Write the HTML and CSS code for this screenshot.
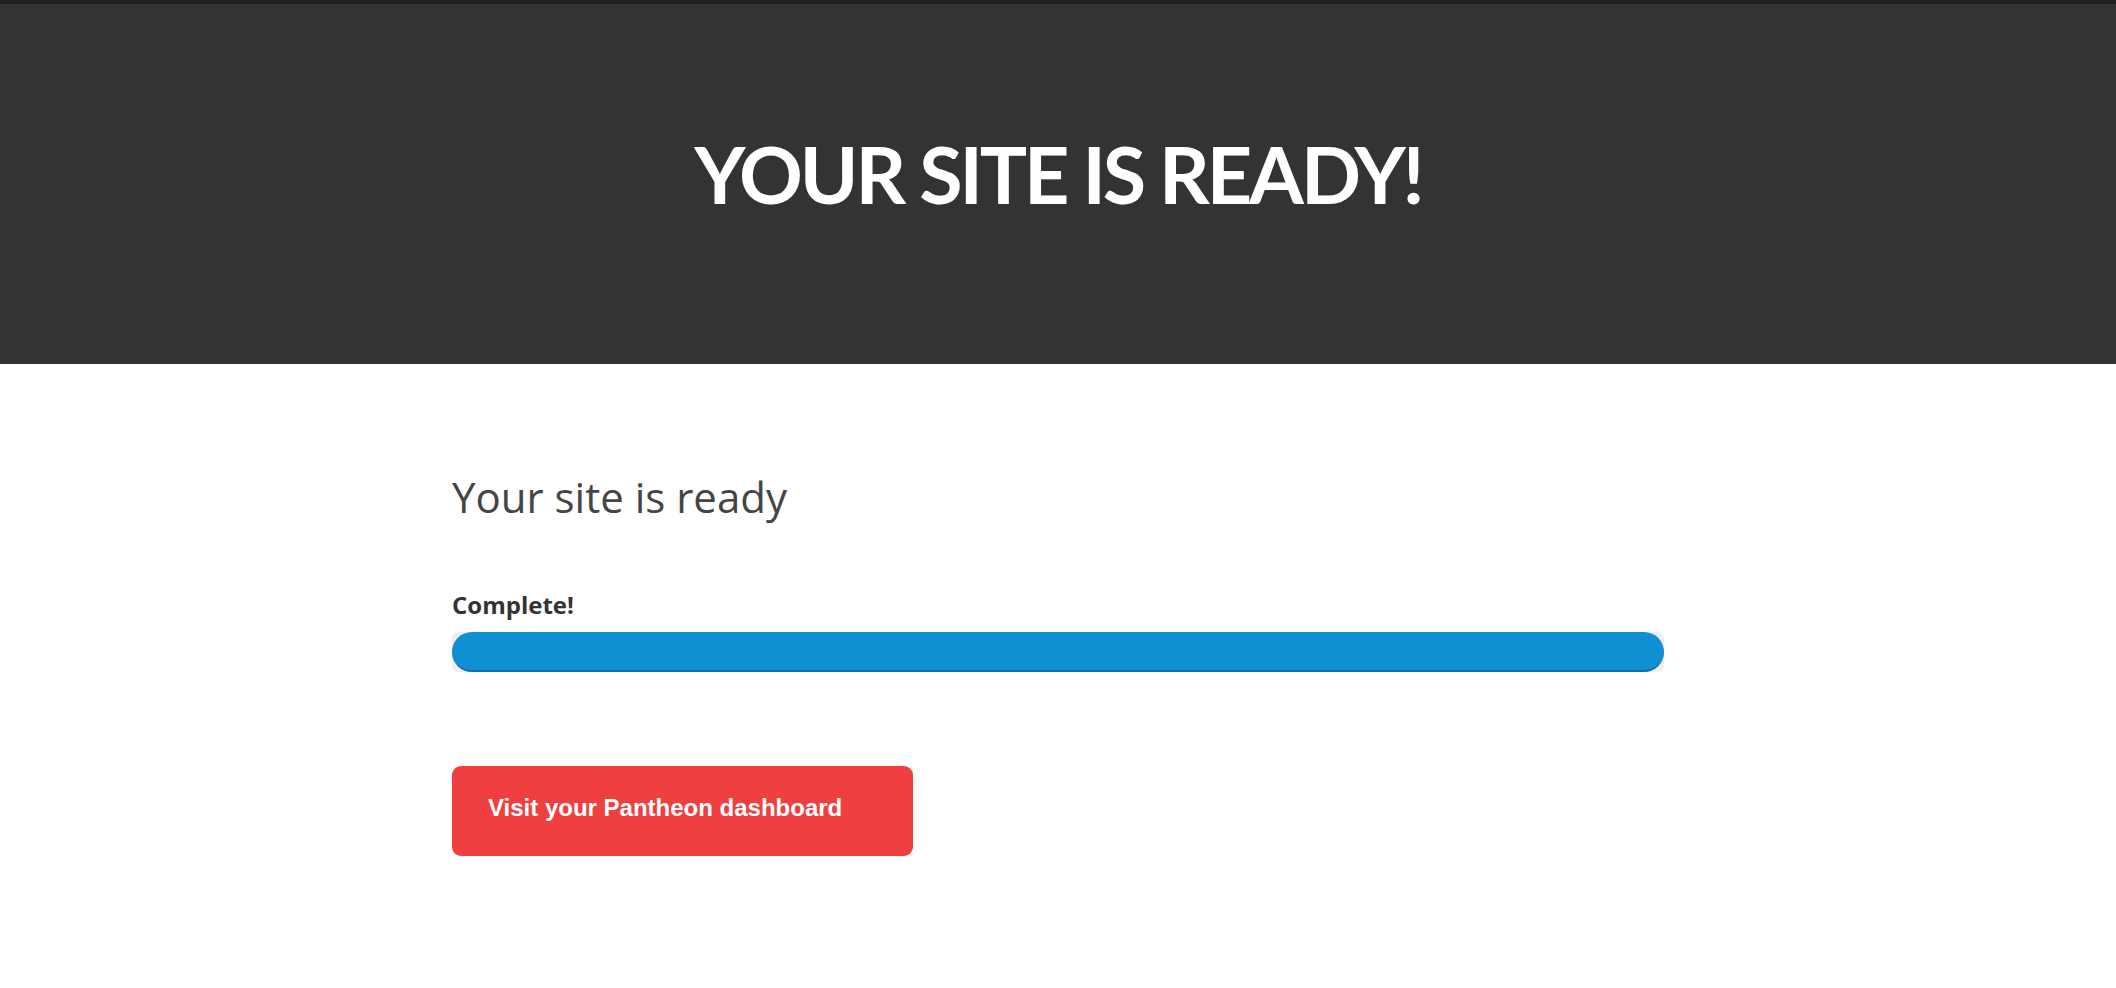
FILE: index.html
```html
<!DOCTYPE html>
<html lang="en">
<head>
<meta charset="utf-8">
<title>Your site is ready</title>
<link rel="stylesheet" href="styles.css">
</head>
<body>
<div class="topbar"></div>
<header class="hero">
  <h1 class="hero-title">YOUR SITE IS READY!</h1>
</header>
<main class="content">
  <h2 class="content-title">Your site is ready</h2>
  <div class="progress-label">Complete!</div>
  <div class="progress">
    <div class="progress-fill" style="width: 100%"></div>
  </div>
  <a class="btn" href="#">Visit your Pantheon dashboard</a>
</main>
</body>
</html>
```

FILE: styles.css
```css
html, body {
  margin: 0;
  padding: 0;
  background: #ffffff;
}

.topbar {
  height: 4px;
  background: #202020;
}

.hero {
  height: 360px;
  box-sizing: border-box;
  padding-top: 130px;
  background: #333333;
}

.hero-title {
  margin: 0;
  text-align: center;
  font-family: "Lato", "DejaVu Sans", sans-serif;
  font-weight: 700;
  font-size: 79px;
  line-height: 79px;
  color: #ffffff;
  letter-spacing: -3.1px;
}

.content {
  width: 1212px;
  margin: 0 auto;
  padding-top: 104px;
}

.content-title {
  margin: 0;
  font-family: "Open Sans", "Noto Sans", sans-serif;
  font-weight: 400;
  font-size: 42px;
  line-height: 57px;
  color: #454545;
}

.progress-label {
  margin-top: 66px;
  font-family: "Open Sans", "Noto Sans", sans-serif;
  font-weight: 700;
  font-size: 24px;
  line-height: 28px;
  color: #333333;
}

.progress {
  margin-top: 13px;
  height: 40px;
  border-radius: 6px;
  background: #eeeeee;
}

.progress-fill {
  height: 40px;
  box-sizing: border-box;
  border-radius: 20px;
  background: #0f90d3;
  border-bottom: 2px solid #0a6fae;
}

.btn {
  display: block;
  margin-top: 94px;
  width: 461px;
  height: 90px;
  box-sizing: border-box;
  padding: 30px 0 0 36px;
  border-radius: 9px;
  background: #ef3f40;
  color: #ffffff;
  text-decoration: none;
  font-family: "Liberation Sans", Arial, sans-serif;
  font-weight: 700;
  font-size: 24px;
  line-height: 24px;
}
```
